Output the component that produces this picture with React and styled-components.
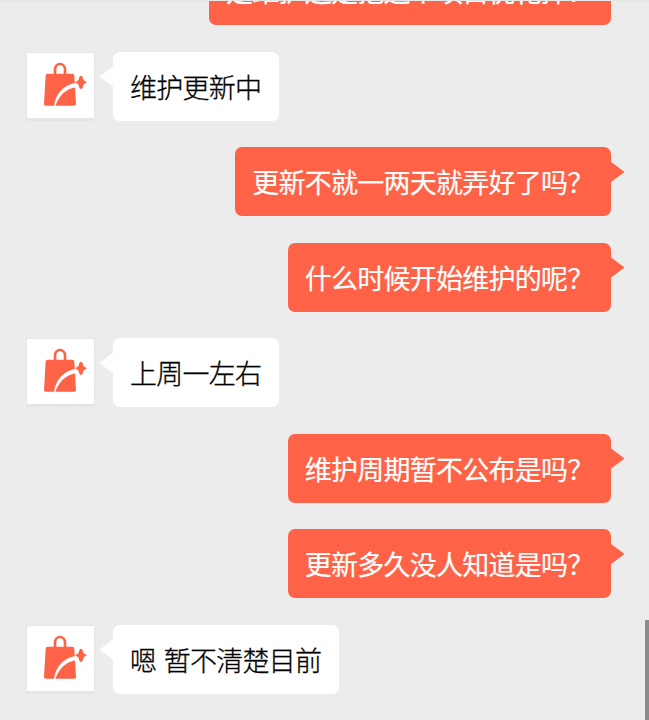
import React from 'react';
import styled, { createGlobalStyle } from 'styled-components';

const messages = [
    { id: 1, own: true, text: '是维护还是把这个项目优化掉？' },
    { id: 2, own: false, text: '维护更新中' },
    { id: 3, own: true, text: '更新不就一两天就弄好了吗？' },
    { id: 4, own: true, text: '什么时候开始维护的呢？' },
    { id: 5, own: false, text: '上周一左右' },
    { id: 6, own: true, text: '维护周期暂不公布是吗？' },
    { id: 7, own: true, text: '更新多久没人知道是吗？' },
    { id: 8, own: false, text: '嗯 暂不清楚目前' },
];

const GlobalStyle = createGlobalStyle`
    body {
        margin: 0;
        overflow: hidden;
        background: #ececec;
    }
`;

const ChatWindow = styled.main`
    position: relative;
    box-sizing: border-box;
    height: 720px;
    overflow: hidden;
    border-top: 1px solid #e6e6e6;
    background: #ececec;
    font-family: 'Noto Sans CJK SC', sans-serif;
`;

const MessageList = styled.div`
    display: flex;
    flex-direction: column;
    gap: 26.5px;
    margin-top: -44.6px;
    padding: 0 38px 0 26px;
`;

const MessageRow = styled.div`
    display: flex;
    flex-shrink: 0;
    justify-content: ${({ $own }) => ($own ? 'flex-end' : 'flex-start')};
    gap: 18px;
    height: 69px;
`;

const Avatar = styled.div`
    box-sizing: border-box;
    width: 69px;
    height: 69px;
    border: 1px solid #e5e5e5;
    border-bottom-width: 3px;
    border-radius: 2px;
    background: #fff;

    svg {
        display: block;
    }
`;

const Bubble = styled.div`
    position: relative;
    box-sizing: border-box;
    height: 69px;
    padding: 0 17.5px 0 17px;
    border-radius: 7px;
    color: ${({ $own }) => ($own ? '#fff' : '#000')};
    background: ${({ $own }) => ($own ? '#ff6347' : '#fff')};
    font-size: 27px;
    font-weight: ${({ $own }) => ($own ? 400 : 300)};
    letter-spacing: -0.75px;
    line-height: 69px;
    word-spacing: 2.4px;
    white-space: nowrap;
    -webkit-text-stroke: ${({ $own }) => ($own ? '0.2px' : '0.3px')} currentColor;

    &::after {
        content: '';
        position: absolute;
        top: 14px;
        ${({ $own }) => ($own ? 'right' : 'left')}: -13.5px;
        width: 14px;
        height: 21px;
        background: inherit;
        clip-path: ${({ $own }) =>
            $own
                ? 'polygon(0 0, 100% 50%, 0 100%)'
                : 'polygon(100% 0, 0 50%, 100% 100%)'};
    }
`;

const ScrollThumb = styled.div`
    position: absolute;
    right: 0;
    bottom: 0;
    width: 4px;
    height: 100px;
    background: #8b8b8b;
`;

const BagLogo = () => (
    <svg width="67" height="65" viewBox="36 39 201 195">
        <path
            d="M120 104V88a15 16 0 0 1 30 0v16"
            fill="none"
            stroke="#ff6347"
            strokeWidth="8"
        />
        <path
            d="M98 101h74q6 0 6 6l5 85q0 5-5 5H92q-5 0-5-5l5-85q0-6 6-6z"
            fill="#ff6347"
        />
        <path
            d="M117 198C122 160 148 132 185 129V141C151 147 132 167 121 198z"
            fill="#fff"
        />
        <path
            d="M198 107q5 0 7 12 3 4 11 8-8 4-11 8-2 12-7 12t-7-12q-3-4-11-8 8-4 11-8 2-12 7-12z"
            fill="#ff6347"
        />
    </svg>
);

const Message = ({ own, text }) => (
    <MessageRow $own={own}>
        {!own && (
            <Avatar>
                <BagLogo />
            </Avatar>
        )}
        <Bubble $own={own}>{text}</Bubble>
    </MessageRow>
);

const App = () => (
    <>
        <GlobalStyle />
        <ChatWindow>
            <MessageList>
                {messages.map(({ id, own, text }) => (
                    <Message key={id} own={own} text={text} />
                ))}
            </MessageList>
            <ScrollThumb />
        </ChatWindow>
    </>
);

export default App;
